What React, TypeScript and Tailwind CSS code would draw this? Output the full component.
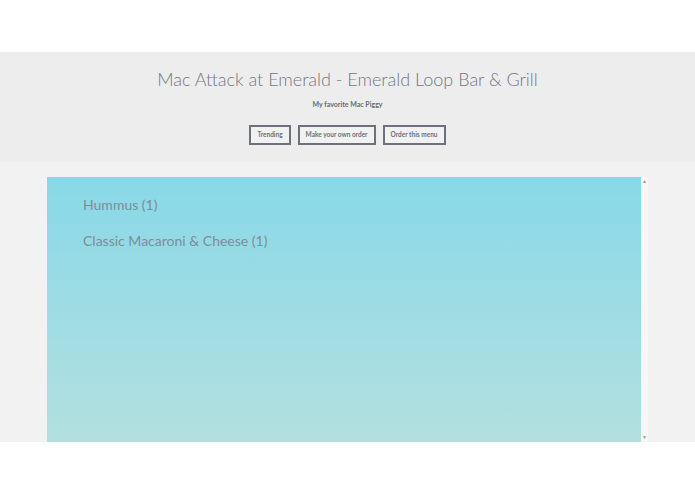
import React from "react";

const items = ["Hummus (1)", "Classic Macaroni & Cheese (1)"];
const actions = ["Trending", "Make your own order", "Order this menu"];

const App = () => {
  return (
    <div className="w-[695px] h-[494px] bg-white font-['Lato','Open_Sans',sans-serif] overflow-hidden">
      <div className="h-[52px]" />
      <header className="h-[110px] bg-[#ededed] flex flex-col items-center pt-[15px]">
        <h1 className="text-[18px] leading-[24px] font-light text-[#737884]">
          Mac Attack at Emerald - Emerald Loop Bar &amp; Grill
        </h1>
        <p className="mt-[8px] text-[7px] leading-[10px] font-bold text-[#666b75]">My favorite Mac Piggy</p>
        <div className="mt-[16px] flex gap-[7px]">
          {actions.map((a) => (
            <button
              key={a}
              className="h-[20px] px-[6px] border-2 border-[#6d717c] bg-[#f1f1f1] text-[6.5px] font-bold text-[#6b707a] leading-none"
            >
              {a}
            </button>
          ))}
        </div>
      </header>
      <section className="h-[280px] bg-[#f2f2f2] pt-[15px] pl-[47px] flex">
        <div className="w-[594px] h-[265px] bg-gradient-to-b from-[#88d8e8] to-[#b3e0df] pl-[36px] pt-[18px]">
          {items.map((it) => (
            <div key={it} className="text-[14px] leading-[20px] text-[#7f8c99] mb-[16px]">
              {it}
            </div>
          ))}
        </div>
        <div className="w-[7px] h-[265px] bg-[#f7f7f7] flex flex-col items-center justify-between py-[2px]">
          <span className="text-[5px] leading-none text-[#999]">▲</span>
          <span className="text-[5px] leading-none text-[#999]">▼</span>
        </div>
      </section>
    </div>
  );
};

export default App;
